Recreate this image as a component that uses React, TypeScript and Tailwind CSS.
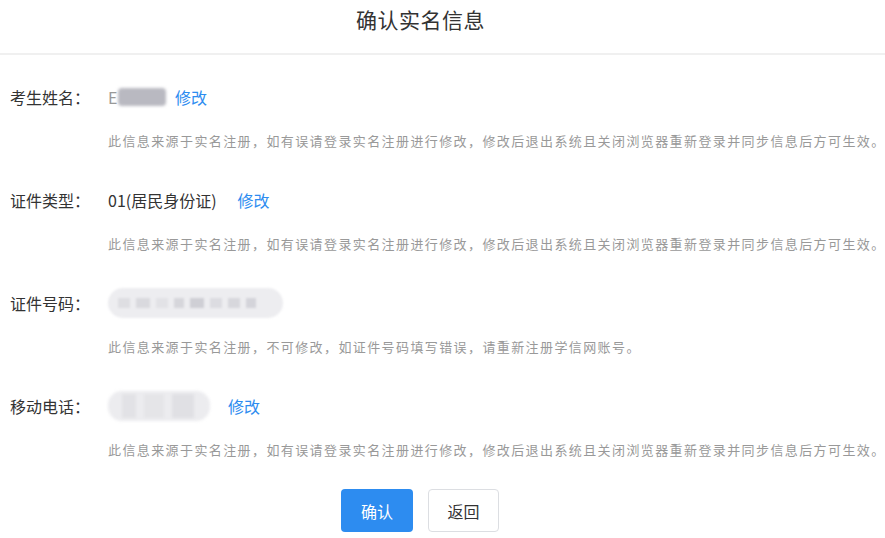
const NOTE_EDIT =
  "此信息来源于实名注册，如有误请登录实名注册进行修改，修改后退出系统且关闭浏览器重新登录并同步信息后方可生效。";
const NOTE_FIXED = "此信息来源于实名注册，不可修改，如证件号码填写错误，请重新注册学信网账号。";

function EditLink() {
  return <a className="text-[16px] text-[#2d8cf0] cursor-pointer">修改</a>;
}

function Row({ label, note, children }: { label: string; note: string; children: React.ReactNode }) {
  return (
    <div className="flex flex-col">
      <div className="flex items-center h-[24px]">
        <span className="w-[98px] shrink-0 text-[16px] text-[#333]">{label}</span>
        <div className="flex items-center">{children}</div>
      </div>
      <p className="mt-[22px] pl-[98px] text-[13px] leading-[20px] tracking-[1.4px] text-[#999] whitespace-nowrap">
        {note}
      </p>
    </div>
  );
}

export default function App() {
  return (
    <div
      className="w-[885px] h-[538px] bg-white overflow-hidden"
      style={{ fontFamily: '"Noto Sans CJK SC", "Noto Sans", sans-serif' }}
    >
      <div className="h-[53px] flex items-start justify-center pr-[44px] pt-[5px]">
        <h1 className="text-[21px] leading-[28px] text-[#333] tracking-[0.5px]">确认实名信息</h1>
      </div>
      <div className="h-[2px] bg-[#f0f0f0]" />

      <div className="pl-[10px] pt-[30px] flex flex-col gap-[37px]">
        <Row label="考生姓名：" note={NOTE_EDIT}>
          <span className="text-[16px] text-[#999] w-[10px]">E</span>
          <div className="w-[48px] h-[18px] rounded-[4px] bg-[#b9b9c1] blur-[1.5px]" />
          <span className="w-[9px]" />
          <EditLink />
        </Row>

        <Row label="证件类型：" note={NOTE_EDIT}>
          <span className="text-[16px] text-[#333] mr-[21px]">01(居民身份证)</span>
          <EditLink />
        </Row>

        <Row label="证件号码：" note={NOTE_FIXED}>
          <div className="w-[175px] h-[30px] rounded-[15px] bg-[#ededf0] blur-[1px] flex items-center px-[10px] gap-[6px]">
            <div className="w-[12px] h-[10px] bg-[#dedee2]" />
            <div className="w-[14px] h-[10px] bg-[#d9d9de]" />
            <div className="w-[12px] h-[10px] bg-[#e2e2e6]" />
            <div className="w-[10px] h-[10px] bg-[#d6d6db]" />
            <div className="w-[14px] h-[10px] bg-[#cfcfd5]" />
            <div className="w-[12px] h-[10px] bg-[#dcdce1]" />
            <div className="w-[12px] h-[10px] bg-[#d7d7dc]" />
            <div className="w-[10px] h-[10px] bg-[#d4d4da]" />
          </div>
        </Row>

        <Row label="移动电话：" note={NOTE_EDIT}>
          <div className="w-[102px] h-[30px] rounded-[14px] bg-[#ececef] blur-[1.5px] flex items-center gap-[8px] px-[14px]">
            <div className="w-[14px] h-[24px] bg-[#e2e2e6]" />
            <div className="w-[20px] h-[24px] bg-[#e5e5e8]" />
            <div className="w-[22px] h-[24px] bg-[#e0e0e4]" />
          </div>
          <span className="w-[18px]" />
          <EditLink />
        </Row>
      </div>

      <div className="mt-[29px] flex justify-center gap-[15px] pr-[45px]">
        <button className="w-[72px] h-[43px] rounded-[4px] bg-[#2d8cf0] text-white text-[16px]">确认</button>
        <button className="w-[71px] h-[43px] rounded-[4px] border border-[#dcdee2] bg-white text-[#333] text-[16px]">
          返回
        </button>
      </div>
    </div>
  );
}
